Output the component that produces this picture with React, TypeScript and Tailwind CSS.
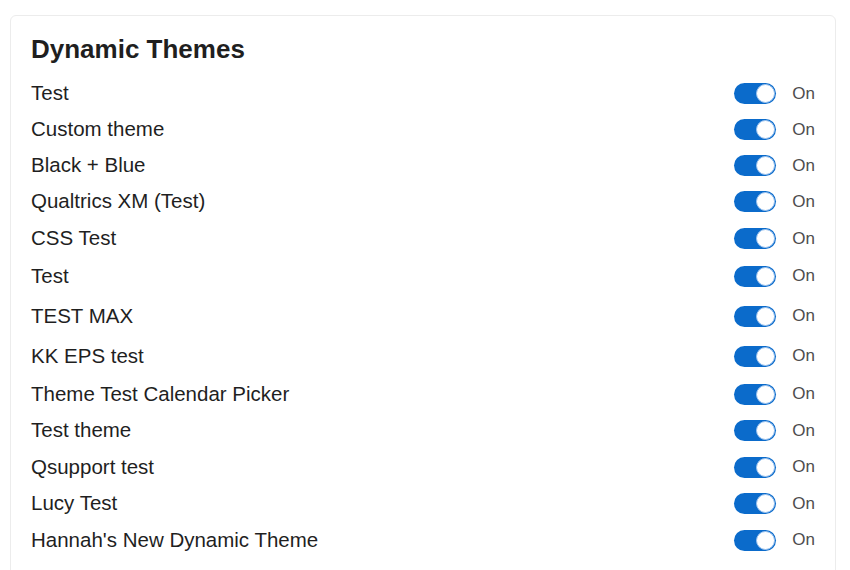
const themes = [
  { name: 'Test', h: 'h-[36.5px]' },
  { name: 'Custom theme', h: 'h-[36px]' },
  { name: 'Black + Blue', h: 'h-[36px]' },
  { name: 'Qualtrics XM (Test)', h: 'h-[36.5px]' },
  { name: 'CSS Test', h: 'h-[36.5px]' },
  { name: 'Test', h: 'h-[39px]' },
  { name: 'TEST MAX', h: 'h-[41px]' },
  { name: 'KK EPS test', h: 'h-[39px]' },
  { name: 'Theme Test Calendar Picker', h: 'h-[37px]' },
  { name: 'Test theme', h: 'h-[36.5px]' },
  { name: 'Qsupport test', h: 'h-[36px]' },
  { name: 'Lucy Test', h: 'h-[36.5px]' },
  { name: "Hannah's New Dynamic Theme", h: 'h-[37px]' },
];

function Toggle() {
  return (
    <div className="relative w-[42px] h-[21px] rounded-full bg-[#0b6bcb] shrink-0">
      <div className="absolute right-[1px] top-[1px] w-[19px] h-[19px] rounded-full bg-white border border-[#9cc3ef]" />
    </div>
  );
}

export default function App() {
  return (
    <div className="min-h-screen bg-white pt-[15px] pl-[10px]" style={{ fontFamily: '"Liberation Sans", Arial, sans-serif' }}>
      <div className="w-[826px] rounded-md border border-[#ececec] pt-[18px] pl-[20px] pr-[20px] pb-[20px]">
        <h2 className="text-[26px] leading-[30px] font-bold text-[#1f1f1f]">Dynamic Themes</h2>
        <div className="mt-[11px] flex flex-col">
          {themes.map((t, i) => (
            <div key={i} className={`flex items-center ${t.h}`}>
              <span className="text-[20.5px] text-[#1f1f1f]">{t.name}</span>
              <div className="ml-auto flex items-center gap-[16px]">
                <Toggle />
                <span className="text-[17px] text-[#4d4d4d]">On</span>
              </div>
            </div>
          ))}
        </div>
      </div>
    </div>
  );
}
